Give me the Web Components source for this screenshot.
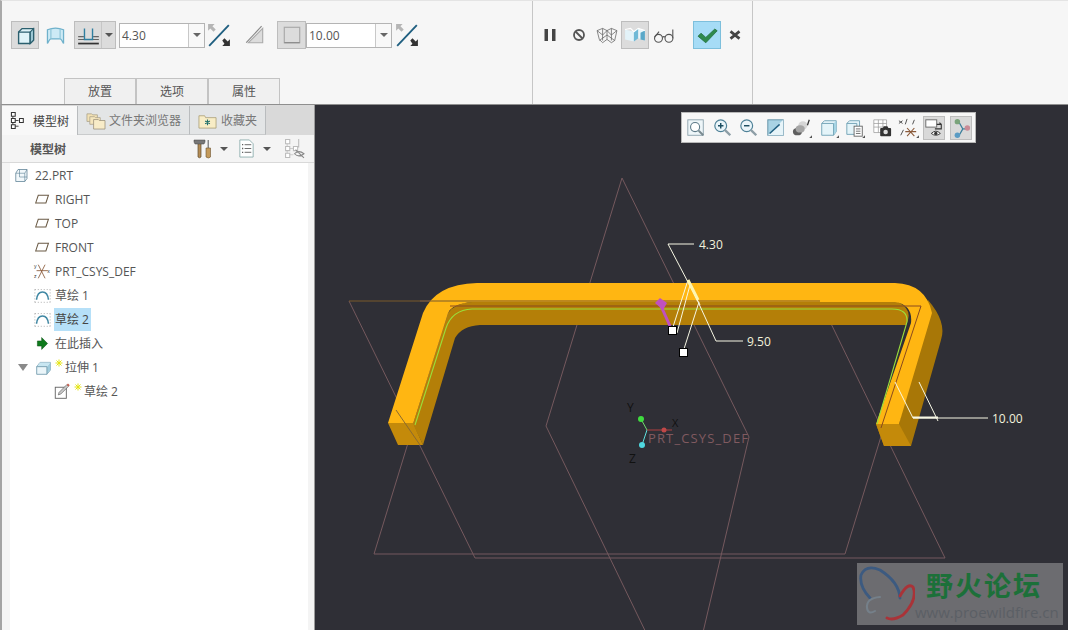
<!DOCTYPE html>
<html>
<head>
<meta charset="utf-8">
<title>Creo</title>
<style>
	html, body { margin: 0; padding: 0; background: #2f2f36; }
	body { font: 12px "Open Sans", "Noto Sans CJK SC", sans-serif; color: #555; overflow: hidden; }
</style>
</head>
<body>
<pe-app>
	<pe-ribbon slot="ribbon">
		<pe-btn slot="shape" active><pe-icon name="solid" size="23"></pe-icon></pe-btn>
		<pe-btn slot="shape" style="margin-left:2px"><pe-icon name="surface" size="23"></pe-icon></pe-btn>
		<pe-split slot="shape" style="margin-left:5px"><pe-icon name="blind" size="23"></pe-icon></pe-split>
		<pe-spin slot="shape" value="4.30" style="margin-left:3px"></pe-spin>
		<pe-btn slot="shape"><pe-icon name="flip" size="24" box="22"></pe-icon></pe-btn>
		<pe-btn slot="shape" style="margin-left:8px"><pe-icon name="cut" size="22"></pe-icon></pe-btn>
		<pe-btn slot="shape" active style="margin-left:8px;width:29px"><pe-icon name="thin" size="22"></pe-icon></pe-btn>
		<pe-spin slot="shape" value="10.00"></pe-spin>
		<pe-btn slot="shape" style="margin-left:1px"><pe-icon name="flip" size="24" box="22"></pe-icon></pe-btn>

		<pe-tab slot="tabs">放置</pe-tab>
		<pe-tab slot="tabs">选项</pe-tab>
		<pe-tab slot="tabs">属性</pe-tab>

		<pe-btn slot="run"><pe-icon name="pause" size="20"></pe-icon></pe-btn>
		<pe-btn slot="run" style="margin-left:1px"><pe-icon name="stop" size="20"></pe-icon></pe-btn>
		<pe-btn slot="run"><pe-icon name="wire" size="22"></pe-icon></pe-btn>
		<pe-btn slot="run" active><pe-icon name="shaded" size="22"></pe-icon></pe-btn>
		<pe-btn slot="run" style="margin-left:1px"><pe-icon name="glasses" size="22"></pe-icon></pe-btn>
		<pe-btn slot="run" ok style="margin-left:15px"><pe-icon name="check" size="24"></pe-icon></pe-btn>
		<pe-btn slot="run"><pe-icon name="close" size="18"></pe-icon></pe-btn>
	</pe-ribbon>

	<pe-sidebar slot="side">
		<pe-side-tab slot="tabs" active icon="tree" style="width:76px">模型树</pe-side-tab>
		<pe-side-tab slot="tabs" icon="folders" style="width:112px">文件夹浏览器</pe-side-tab>
		<pe-side-tab slot="tabs" icon="favorite" style="width:76px">收藏夹</pe-side-tab>

		<pe-tree-item level="0" icon="part">22.PRT</pe-tree-item>
		<pe-tree-item level="1" icon="plane">RIGHT</pe-tree-item>
		<pe-tree-item level="1" icon="plane">TOP</pe-tree-item>
		<pe-tree-item level="1" icon="plane">FRONT</pe-tree-item>
		<pe-tree-item level="1" icon="csys">PRT_CSYS_DEF</pe-tree-item>
		<pe-tree-item level="1" icon="sketch">草绘 1</pe-tree-item>
		<pe-tree-item level="1" icon="sketch" selected>草绘 2</pe-tree-item>
		<pe-tree-item level="1" icon="insert">在此插入</pe-tree-item>
		<pe-tree-item level="1" icon="extrude" star open>拉伸 1</pe-tree-item>
		<pe-tree-item level="2" icon="pencil" star>草绘 2</pe-tree-item>
	</pe-sidebar>

	<pe-viewport slot="view">
		<pe-view-toolbar></pe-view-toolbar>
		<pe-watermark></pe-watermark>
	</pe-viewport>
</pe-app>

<script>
const ICONS = {
	solid: '<path d="M4 7l3-3h10v10l-3 3H4z" fill="#dff3f8" stroke="#2b5f6e" stroke-width="1.2"/><path d="M14 7l3-3v10l-3 3z" fill="#9ec9d6" stroke="#2b5f6e"/><path d="M4 7h10v10" fill="none" stroke="#2b5f6e"/>',
	surface: '<path d="M3 5q7-3 14 0v12q-2-4-3-4H6q-1 0-3 4z" fill="#cdeaf5" stroke="#6fb1cb" stroke-width="1.1"/><path d="M6 4v9M14 4v9" stroke="#8cc4d8"/>',
	blind: '<path d="M1 11h5M14 11h5M1 13.500h18" stroke="#666" stroke-width="1"/><path d="M1 17h18" stroke="#333" stroke-width="1.500"/><path d="M6.500 4v9.500h7V4" fill="none" stroke="#2f7fa0" stroke-width="1.200"/>',
	flip: '<path d="M2 21L20 2" stroke="#1f5f80" stroke-width="1.700"/><path d="M1 1h6L5 3l3 3-2 2-3-3-2 2z" fill="#b5b5b5"/><path d="M21 21h-7l2-2-2-3 2-2 3 3 2-2z" fill="#333"/>',
	cut: '<path d="M4 17L17 4v13z" fill="#dcdcdc" stroke="#aaa"/><path d="M2 17L16 2" stroke="#888"/>',
	thin: '<rect x="3" y="3" width="14" height="14" fill="none" stroke="#aaa" stroke-width="1.100"/><path d="M3 17h14" stroke="#888"/>',
	pause: '<path d="M4.500 4h3.500v12H4.500zM12 4h3.500v12H12z" fill="#444"/>',
	stop: '<circle cx="10" cy="10" r="5" fill="none" stroke="#555" stroke-width="1.800"/><path d="M6.500 6.500l7 7" stroke="#555" stroke-width="1.800"/>',
	wire: '<path d="M1 6l5-2 4 2 4-2 5 2-2 9-3 2-4-3-4 3-3-3zM6 4v11M14 4v11M10 6v8M1 6l5 4 4-4 4 4 5-4M3 15l7-5 7 5" fill="none" stroke="#666" stroke-width=".7"/>',
	shaded: '<path d="M1 5l8 2v9l-8-2z" fill="#e3f3f9"/><path d="M9 7l4-3v9l-4 3z" fill="#6fb9d6"/><path d="M13 4l6 2v9l-6-2z" fill="#e8f6fb"/><path d="M15 8l4-2v9l-4-1z" fill="#5aa8c8"/><path d="M1 5l5-1 3 3 4-3 6 2" fill="none" stroke="#fff"/>',
	glasses: '<circle cx="5" cy="13" r="3.600" fill="none" stroke="#555" stroke-width="1"/><circle cx="14.500" cy="13" r="3.600" fill="none" stroke="#555" stroke-width="1"/><path d="M8.500 12q1.500-1 2.500 0M1.500 12l4-5M18 13V5" fill="none" stroke="#555" stroke-width="1"/>',
	check: '<path d="M2.500 11l2.500-2.500 4 3.500 7.500-7 2 1.500-9.500 10z" fill="#2f8a4c" stroke="#1d6a38" stroke-width=".6"/>',
	close: '<path d="M5 6l10 8M15 6L5 14" stroke="#444" stroke-width="3"/>',
	tree: '<path d="M3 4v12h6M3 10h6" fill="none" stroke="#444"/><path d="M1.500 1.500h4v4h-4zM1.500 8h4v4h-4zM1.500 14.500h4v4h-4zM10 8h4v4h-4z" fill="#fff" stroke="#333" stroke-width="1.100"/>',
	folders: '<path d="M1 3h5l1 1h5v7H1z" fill="#f3e2b4" stroke="#a8a08a" stroke-width=".8"/><path d="M4 6h5l1 1h5v7H4z" fill="#f5e6bd" stroke="#a8a08a" stroke-width=".8"/><path d="M8 9h5l1 1h6v9H8z" fill="#f8ecc8" stroke="#998f78" stroke-width=".8"/>',
	favorite: '<path d="M1 5h6l1 2h11v11H1z" fill="#f8edc6" stroke="#a89a70" stroke-width=".8"/><path d="M10 9v6M7.500 10.500l5 3M12.500 10.500l-5 3" stroke="#1f6f6a" stroke-width="1.200"/>',
	tools: '<path d="M5 4h3v14q-1.500 1.500-3 0z" fill="#b58d55" stroke="#5d4a2e" stroke-width=".7"/><path d="M1 1h11v2l-1 2H2L1 3z" fill="#777" stroke="#444" stroke-width=".5"/><path d="M14.500 1h1.500v8h-1.500z" fill="#888"/><path d="M13 9h4.500v9q-2 2-4.500 0z" fill="#c49a5a" stroke="#6d5430" stroke-width=".6"/>',
	doclist: '<path d="M3 1h10l4 4v14H3z" fill="#fff" stroke="#8aa" stroke-width=".9"/><path d="M5.500 6h1M5.500 10h1M5.500 14h1" stroke="#333" stroke-width="1.400"/><path d="M8 6h7M8 10h7M8 14h7" stroke="#666"/>',
	treeoff: '<path d="M3 4v12h6M3 10h6" fill="none" stroke="#ccc"/><path d="M1.500 1.500h4v4h-4zM1.500 8h4v4h-4zM1.500 14.500h4v4h-4zM9 8h4v4H9zM14 1v8" fill="#fff" stroke="#bbb"/><path d="M10 15q4-4 9 0-5 4-9 0zM11 11l8 8" fill="none" stroke="#888"/>',
	part: '<path d="M1 7l3-5h12v12l-3 4H1z" fill="#f2f8fb" stroke="#5b7f93"/><path d="M1 7h12v11M13 7l3-5M6 2v10h10" fill="none" stroke="#5b7f93" stroke-width=".8"/>',
	plane: '<path d="M5 5h12l-3 9H2z" fill="#fff" stroke="#6a5a45" stroke-width="1.200"/>',
	csys: '<path d="M5 2l8 16M13 2L5 18M3 9h13" stroke="#8a5a3a" stroke-width="1"/><text x="0" y="6" font-size="6" font-family="Liberation Sans" fill="#333">y</text><text x="0" y="18" font-size="6" font-family="Liberation Sans" fill="#333">z</text><text x="15.500" y="12" font-size="6" font-family="Liberation Sans" fill="#333">x</text>',
	sketch: '<path d="M3 15q1-9 7-9t7 9" fill="none" stroke="#3f87a3" stroke-width="1.800"/><path d="M1 3h18M1 18h18M1 3v15M19 3v15" fill="none" stroke="#777" stroke-width=".8" stroke-dasharray="1 2.500"/>',
	insert: '<path d="M4 7h5V3l7 7-7 7v-4H4z" fill="#0e7a1c" stroke="#0a4f14" stroke-width=".6"/>',
	extrude: '<path d="M2 9l4-5h12v9l-4 5H2z" fill="#eaf5f9" stroke="#6f97aa"/><path d="M14 9l4-5v9l-4 5z" fill="#9fcbdc"/><path d="M2 9l4-5h12l-4 5z" fill="#c8e6f1"/><path d="M2 9h12v9" fill="none" stroke="#6f97aa"/>',
	pencil: '<rect x="1.500" y="5" width="13" height="13" fill="#fff" stroke="#666" stroke-width="1.100"/><path d="M5 14l1-3 9-9 2 2-9 9z" fill="#c9c9c9" stroke="#555" stroke-width=".7"/><path d="M15 2l2 2 1.500-1.500-2-2z" fill="#c65c4c"/>',
	star: '<path d="M4 .5v7M.5 4h7M1.500 1.500l5 5M6.500 1.500l-5 5" stroke="#e4e414" stroke-width="1"/>',
	zoomfit: '<rect x="2" y="2" width="17" height="17" fill="#eef6f9" stroke="#8ba2ad"/><circle cx="10" cy="10" r="5" fill="#fff" stroke="#5d7a88" stroke-width="1.200"/><path d="M14 14l5 5" stroke="#7a8a90" stroke-width="2.200"/>',
	zoomin: '<circle cx="8.500" cy="8.500" r="6.500" fill="#eaf5fa" stroke="#4e8197" stroke-width="1.300"/><path d="M5.500 8.500h6M8.500 5.500v6" stroke="#1d4f62" stroke-width="1.600"/><path d="M13 13l6 6" stroke="#8d9ea6" stroke-width="2.600"/>',
	zoomout: '<circle cx="8.500" cy="8.500" r="6.500" fill="#eaf5fa" stroke="#4e8197" stroke-width="1.300"/><path d="M5.500 8.500h6" stroke="#1d4f62" stroke-width="1.600"/><path d="M13 13l6 6" stroke="#8d9ea6" stroke-width="2.600"/>',
	repaint: '<rect x="2" y="2" width="17" height="17" fill="#a9d3e4" stroke="#5d8ea3"/><path d="M2 19L19 2v17z" fill="#e7f4f9"/><path d="M4 17L15 7" stroke="#1f5f80" stroke-width="1.600"/>',
	shade: '<ellipse cx="6" cy="15" rx="5" ry="4" fill="#5f5f5f"/><ellipse cx="12" cy="8" rx="5" ry="4.500" fill="#d6d6d6"/><ellipse cx="9" cy="12" rx="5" ry="4" fill="#a6a6a6"/><path d="M19 2l-2 6" stroke="#333" stroke-width="1.400"/><path d="M22 19v3h-3z" fill="#555"/>',
	box: '<path d="M3 6l3-3h13v12l-3 4H3z" fill="#e4f4f9" stroke="#6fa1b5"/><path d="M16 6l3-3v12l-3 4z" fill="#a7d5e5"/><path d="M3 6h13v13" fill="none" stroke="#6fa1b5"/><path d="M22 19v3h-3z" fill="#555"/>',
	boxdoc: '<path d="M2 6l3-3h11v12l-3 3H2z" fill="#e4f4f9" stroke="#6fa1b5"/><path d="M2 6h11v12" fill="none" stroke="#6fa1b5"/><rect x="10" y="9" width="9" height="11" fill="#fff" stroke="#666"/><path d="M12 12h5M12 14.500h5M12 17h5" stroke="#666"/><path d="M22 19v3h-3z" fill="#555"/>',
	camera: '<path d="M2 2h14v14H2zM2 6h14M2 10h14M7 2v14M12 2v14" fill="#fff" stroke="#999" stroke-width=".8"/><rect x="9" y="11" width="12" height="9" rx="1" fill="#333"/><circle cx="15" cy="15.500" r="2.500" fill="#ddd"/><path d="M12 11l1-2h4l1 2" fill="#333"/>',
	datum: '<path d="M1 3l4 3M5 3L1 6M10 1L8 7M3 19l3-6M18 2l-2 5" stroke="#444"/><path d="M10 11l8 9M18 11l-8 9M8 15h12" stroke="#8a5a3a" stroke-width="1.200"/><path d="M23 19v3h-3z" fill="#555"/>',
	annot: '<rect x="2" y="2" width="12" height="8" fill="#fff" stroke="#666"/><path d="M12 12h7V7h-5M19 7l-2-2" fill="none" stroke="#333" stroke-width="1.200"/><path d="M8 17q5-5 10 0-5 4-10 0z" fill="#fff" stroke="#333"/><circle cx="13" cy="17" r="1.800" fill="#333"/>',
	spin: '<path d="M9 5l4 7-4 7M13 12h5" fill="none" stroke="#3c7f9c" stroke-width="1.400"/><circle cx="7" cy="4" r="3" fill="#7aa37a"/><circle cx="18" cy="11" r="3" fill="#c98a96"/><circle cx="7" cy="19" r="3" fill="#5b9cc4"/>'
};

class PeIcon extends HTMLElement {
	connectedCallback() {
		const size = this.getAttribute('size') || 20;
		const box = this.getAttribute('box') || 20;
		this.attachShadow({ mode: 'open' }).innerHTML = `
			<style>:host { display: inline-flex; flex: none; } svg { display: block; overflow: visible; }</style>
			<svg width="${size}" height="${size}" viewBox="0 0 ${box} ${box}">${ICONS[this.getAttribute('name')] || ''}</svg>`;
	}
}

class PeApp extends HTMLElement {
	constructor() {
		super();
		this.attachShadow({ mode: 'open' }).innerHTML = `
			<style>
				:host { display: grid; grid-template: 105px 525px / 315px 753px; width: 1068px; height: 630px; overflow: hidden; }
				.top { grid-column: 1 / 3; display: grid; }
				.side, .view { display: grid; min-height: 0; }
			</style>
			<div class="top"><slot name="ribbon"></slot></div>
			<div class="side"><slot name="side"></slot></div>
			<div class="view"><slot name="view"></slot></div>`;
	}
}

class PeRibbon extends HTMLElement {
	constructor() {
		super();
		this.attachShadow({ mode: 'open' }).innerHTML = `
			<style>
				:host { display: flex; background: #f6f6f6; border-left: 2px solid #a9a9a9; border-top: 1px solid #e4e4e4; border-bottom: 1px solid #8f8f8f; box-sizing: border-box; }
				section { box-sizing: border-box; border-right: 1px solid #c6c6c6; display: flex; flex-direction: column; justify-content: space-between; padding-top: 20px; }
				.a { width: 531px; padding-left: 9px; }
				.b { width: 220px; padding-left: 3px; }
				.row { display: flex; align-items: center; height: 28px; }
				.tabs { display: flex; margin-left: 53px; }
			</style>
			<section class="a">
				<div class="row"><slot name="shape"></slot></div>
				<div class="tabs"><slot name="tabs"></slot></div>
			</section>
			<section class="b">
				<div class="row"><slot name="run"></slot></div>
			</section>`;
	}
}

class PeBtn extends HTMLElement {
	constructor() {
		super();
		this.attachShadow({ mode: 'open' }).innerHTML = `
			<style>
				:host { display: flex; align-items: center; justify-content: center; width: 28px; height: 28px; box-sizing: border-box; flex: none; }
				:host([active]) { background: #dcdcdc; border: 1px solid #bdbdbd; }
				:host([ok]) { background: #a6dcf6; border: 1px solid #7dbfdc; }
			</style>
			<slot></slot>`;
	}
}

class PeSplit extends HTMLElement {
	constructor() {
		super();
		this.attachShadow({ mode: 'open' }).innerHTML = `
			<style>
				:host { display: flex; width: 42px; height: 28px; flex: none; box-sizing: border-box; background: #dcdcdc; border: 1px solid #bdbdbd; }
				.main { width: 26px; display: flex; align-items: center; justify-content: center; border-right: 1px solid #c6c6c6; }
				.drop { flex: 1; display: flex; align-items: center; justify-content: center; }
				.drop i { border: 4px solid transparent; border-top: 4px solid #555; border-bottom: 0; }
			</style>
			<div class="main"><slot></slot></div>
			<div class="drop"><i></i></div>`;
	}
}

class PeSpin extends HTMLElement {
	connectedCallback() {
		this.attachShadow({ mode: 'open' }).innerHTML = `
			<style>
				:host { display: flex; width: 86px; height: 25px; box-sizing: border-box; flex: none; background: #fff; border: 1px solid #b4b4b4; font-size: 12px; color: #555; }
				span { flex: 1; line-height: 23px; padding-left: 2px; }
				.drop { flex: none; width: 15px; border-left: 1px solid #c8c8c8; background: #f8f8f8; display: flex; align-items: center; justify-content: center; }
				.drop i { border: 4px solid transparent; border-top: 4px solid #666; border-bottom: 0; }
			</style>
			<span>${this.getAttribute('value')}</span>
			<div class="drop"><i></i></div>`;
	}
}

class PeTab extends HTMLElement {
	constructor() {
		super();
		this.attachShadow({ mode: 'open' }).innerHTML = `
			<style>
				:host { display: block; width: 72px; height: 26px; box-sizing: border-box; line-height: 25px; text-align: center; background: #f0f0f0; border: 1px solid #c3c3c3; border-bottom: 0; font-size: 12px; color: #555; }
			</style>
			<slot></slot>`;
	}
}

class PeSideTab extends HTMLElement {
	connectedCallback() {
		this.attachShadow({ mode: 'open' }).innerHTML = `
			<style>
				:host { display: flex; align-items: center; box-sizing: border-box; height: 29px; padding-left: 8px; gap: 4px; background: #e3e5e6; color: #777; border-right: 1px solid #b9bcbe; border-bottom: 1px solid #c9cbcc; flex: none; }
				:host([active]) { background: #f8f8f8; color: #444; border-bottom: 0; }
			</style>
			<pe-icon name="${this.getAttribute('icon')}" size="19"></pe-icon><slot></slot>`;
	}
}

class PeSidebar extends HTMLElement {
	constructor() {
		super();
		this.attachShadow({ mode: 'open' }).innerHTML = `
			<style>
				:host { display: flex; flex-direction: column; box-sizing: border-box; background: #f4f4f4; border-left: 2px solid #a3a3a3; border-right: 1px solid #9b9b9b; }
				.tabs { display: flex; background: #d9d9d9; padding-top: 1px; }
				.head { display: flex; align-items: center; height: 28px; box-sizing: border-box; padding-left: 28px; border-bottom: 1px solid #d9d9d9; font-weight: 700; color: #555; }
				.tools { display: flex; align-items: center; margin-left: auto; margin-right: 9px; }
				.drop { border: 4px solid transparent; border-top: 4px solid #555; border-bottom: 0; margin: 0 13px 0 7px; }
				.tree { flex: 1; background: #fff; margin: 0 6px 0 8px; }
			</style>
			<div class="tabs"><slot name="tabs"></slot></div>
			<div class="head">模型树
				<div class="tools">
					<pe-icon name="tools" size="20"></pe-icon><i class="drop" style="margin-right:9px"></i>
					<pe-icon name="doclist" size="19"></pe-icon><i class="drop"></i>
					<pe-icon name="treeoff" size="21"></pe-icon>
				</div>
			</div>
			<div class="tree"><slot></slot></div>`;
	}
}

class PeTreeItem extends HTMLElement {
	connectedCallback() {
		const level = parseInt(this.getAttribute('level')) || 0;
		const caret = this.hasAttribute('open') ? '<i class="caret"></i>' : '';
		const star = this.hasAttribute('star') ? '<pe-icon class="star" name="star" size="8" box="8"></pe-icon>' : '';
		const size = level === 0 ? 15 : 17;
		this.attachShadow({ mode: 'open' }).innerHTML = `
			<style>
				:host { display: flex; align-items: center; height: 24px; padding-left: ${level * 20 + 4}px; color: #555; white-space: nowrap; }
				.ico { width: 16px; margin-right: 5px; flex: none; display: flex; justify-content: center; }
				.caret { flex: none; width: 0; height: 0; border: 5px solid transparent; border-top: 7px solid #8a8a8a; border-bottom: 0; margin: 0 7px 0 -16px; }
				.star { margin: -8px 2px 0 -1px; }
				.txt { height: 23px; line-height: 23px; }
				:host([selected]) .txt { background: #b6e0f8; margin-left: -1px; padding: 0 2px 0 1px; color: #444; }
			</style>
			${caret}<span class="ico"><pe-icon name="${this.getAttribute('icon')}" size="${size}"></pe-icon></span>${star}<span class="txt"><slot></slot></span>`;
	}
}

class PeViewport extends HTMLElement {
	constructor() {
		super();
		this.attachShadow({ mode: 'open' }).innerHTML = `
			<style>
				:host { display: block; position: relative; background: #2f2f36; overflow: hidden; }
				svg { position: absolute; inset: 0; display: block; }
				text { font-family: "Open Sans", sans-serif; font-size: 12px; }
			</style>
			<svg width="753" height="525" viewBox="315 105 753 525">
				<g fill="none" stroke="#75595e" stroke-width="1">
					<path d="M622 178L546 426L652 645M622 178L749 437L700 645"/>
					<path d="M349 301L475 558H945L820 301H420"/>
					<path d="M450 306H921L845 554H374L450 306"/>
				</g>

				<!-- inner wall and outer wall -->
				<path d="M413 424L448 313Q455 303 472 302H898Q914 310 906 325H480Q462 326 455 338L423 445Z" fill="#b47f08"/>
				<path d="M928 300Q947 322 941 340L911 446H884L876 424H899Z" fill="#a87707"/>
				<!-- top face -->
				<path d="M388 423L423 313Q435 284 477 283H895Q926 284 932 313L899 424H876L911 323Q913 305 895 302H472Q452 304 448 313L413 424Z" fill="#ffb612"/>
				<path d="M388 423H413L423 445H398Z" fill="#c48a0a"/>
				<path d="M876 424H899L911 446H884Z" fill="#c48a0a"/>

				<g fill="none" stroke-width="1">
					<path d="M349 301H820" stroke="#7a5a2a"/>
					<path d="M450 306H921L881 428" stroke="#8a4a1e"/>
					<path d="M396 410L420 445" stroke="#8a6a30"/>
				</g>
				<path d="M415 425L446 328Q452 310 472 309H892Q908 309 907 322L877 424" fill="none" stroke="#9adf3c" stroke-width="1.100"/>

				<!-- dimensions -->
				<g fill="none" stroke="#f7f7e4" stroke-width="1">
					<path d="M694 244H668L700 305"/>
					<path d="M743 341H716L688 280L672 330"/>
					<path d="M690 285L677 333M699 302L683 352"/>
					<path d="M988 418H913L895 382M919 382L938 421"/>
					<path d="M913 417.500H938" stroke-width="2"/>
				</g>
				<path d="M688 280L698 300" stroke="#fdf5b0" stroke-width="3"/>
				<path d="M670 326L661 306" stroke="#c050c0" stroke-width="3"/>
				<path d="M655 303L660 298L667 303L663 310Z" fill="#c050c0"/>
				<rect x="668.500" y="326.500" width="8" height="8" fill="#fff" stroke="#000"/>
				<rect x="679.500" y="348.500" width="8" height="8" fill="#fff" stroke="#000"/>
				<text x="699" y="249" fill="#f2f2dc">4.30</text>
				<text x="747" y="346" fill="#f2f2dc">9.50</text>
				<text x="992" y="423" fill="#f2f2dc">10.00</text>

				<!-- csys -->
				<path d="M641 419L647 430" fill="none" stroke="#6fdc6f"/>
				<path d="M647 430L642 445" fill="none" stroke="#5fe0e0"/>
				<path d="M647 430H672" stroke="#b04040"/>
				<circle cx="641" cy="419" r="3" fill="#3fdc3f"/>
				<circle cx="664" cy="430" r="2.500" fill="#c04848"/>
				<circle cx="642" cy="445" r="3" fill="#4fd8e0"/>
				<text x="627" y="412" fill="#111" style="font-size:12px">Y</text>
				<text x="672" y="427" fill="#111" style="font-size:11px">X</text>
				<text x="629" y="463" fill="#111" style="font-size:12px">Z</text>
				<text x="648" y="443" fill="#805a60" textLength="100" style="font-size:13px">PRT_CSYS_DEF</text>
			</svg>
			<slot></slot>`;
	}
}

class PeViewToolbar extends HTMLElement {
	connectedCallback() {
		const names = ['zoomfit', 'zoomin', 'zoomout', 'repaint', 'shade', 'box', 'boxdoc', 'camera', 'datum'];
		const items = names.map(n => `<span class="b"><pe-icon name="${n}" size="20" box="22"></pe-icon></span>`).join('');
		this.attachShadow({ mode: 'open' }).innerHTML = `
			<style>
				:host { position: absolute; left: 366px; top: 7px; display: flex; align-items: center; box-sizing: border-box; width: 295px; height: 31px; padding-left: 1px; background: #f7f7f7; border: 1px solid #b8b8b8; }
				.b { width: 26.500px; height: 24px; display: flex; align-items: center; justify-content: center; box-sizing: border-box; flex: none; }
				.on { width: 22px; background: #d9d9d9; border: 1px solid #bdbdbd; margin-right: 5px; }
			</style>
			${items}
			<span class="b on" style="margin-left:1px"><pe-icon name="annot" size="20" box="22"></pe-icon></span>
			<span class="b on"><pe-icon name="spin" size="20" box="22"></pe-icon></span>`;
	}
}

class PeWatermark extends HTMLElement {
	constructor() {
		super();
		this.attachShadow({ mode: 'open' }).innerHTML = `
			<style>
				:host { position: absolute; right: 5px; bottom: 5px; display: flex; width: 206px; height: 62px; background: #6c6c70; overflow: hidden; }
				svg { flex: none; display: block; }
				.txt { display: flex; flex-direction: column; min-width: 0; }
				.t { font: 700 27px/34px "Noto Sans CJK SC", sans-serif; color: #1c7039; margin: 5px 0 0 11px; letter-spacing: 2px; white-space: nowrap; }
				.u { font: 15px/18px "Open Sans", sans-serif; color: #5b5f65; white-space: nowrap; margin-top: 1px; }
			</style>
			<svg width="58" height="62" viewBox="857 563 58 62" fill="none" stroke-linecap="round">
				<path d="M900 598Q899 582 880 570Q866 564 861 575Q859 586 870 598" stroke="#3c5a80" stroke-width="2.800"/>
				<path d="M900 596Q908 582 913 587Q918 600 903 615Q893 621 887 618" stroke="#a93338" stroke-width="2.800"/>
				<path d="M880 597Q866 598 867 608Q868 615 875 611" stroke="#75808a" stroke-width="2"/>
			</svg>
			<div class="txt"><div class="t">野火论坛</div><div class="u">www.proewildfire.cn</div></div>`;
	}
}

customElements.define('pe-icon', PeIcon);
customElements.define('pe-app', PeApp);
customElements.define('pe-ribbon', PeRibbon);
customElements.define('pe-btn', PeBtn);
customElements.define('pe-split', PeSplit);
customElements.define('pe-spin', PeSpin);
customElements.define('pe-tab', PeTab);
customElements.define('pe-side-tab', PeSideTab);
customElements.define('pe-sidebar', PeSidebar);
customElements.define('pe-tree-item', PeTreeItem);
customElements.define('pe-viewport', PeViewport);
customElements.define('pe-view-toolbar', PeViewToolbar);
customElements.define('pe-watermark', PeWatermark);
</script>
</body>
</html>
